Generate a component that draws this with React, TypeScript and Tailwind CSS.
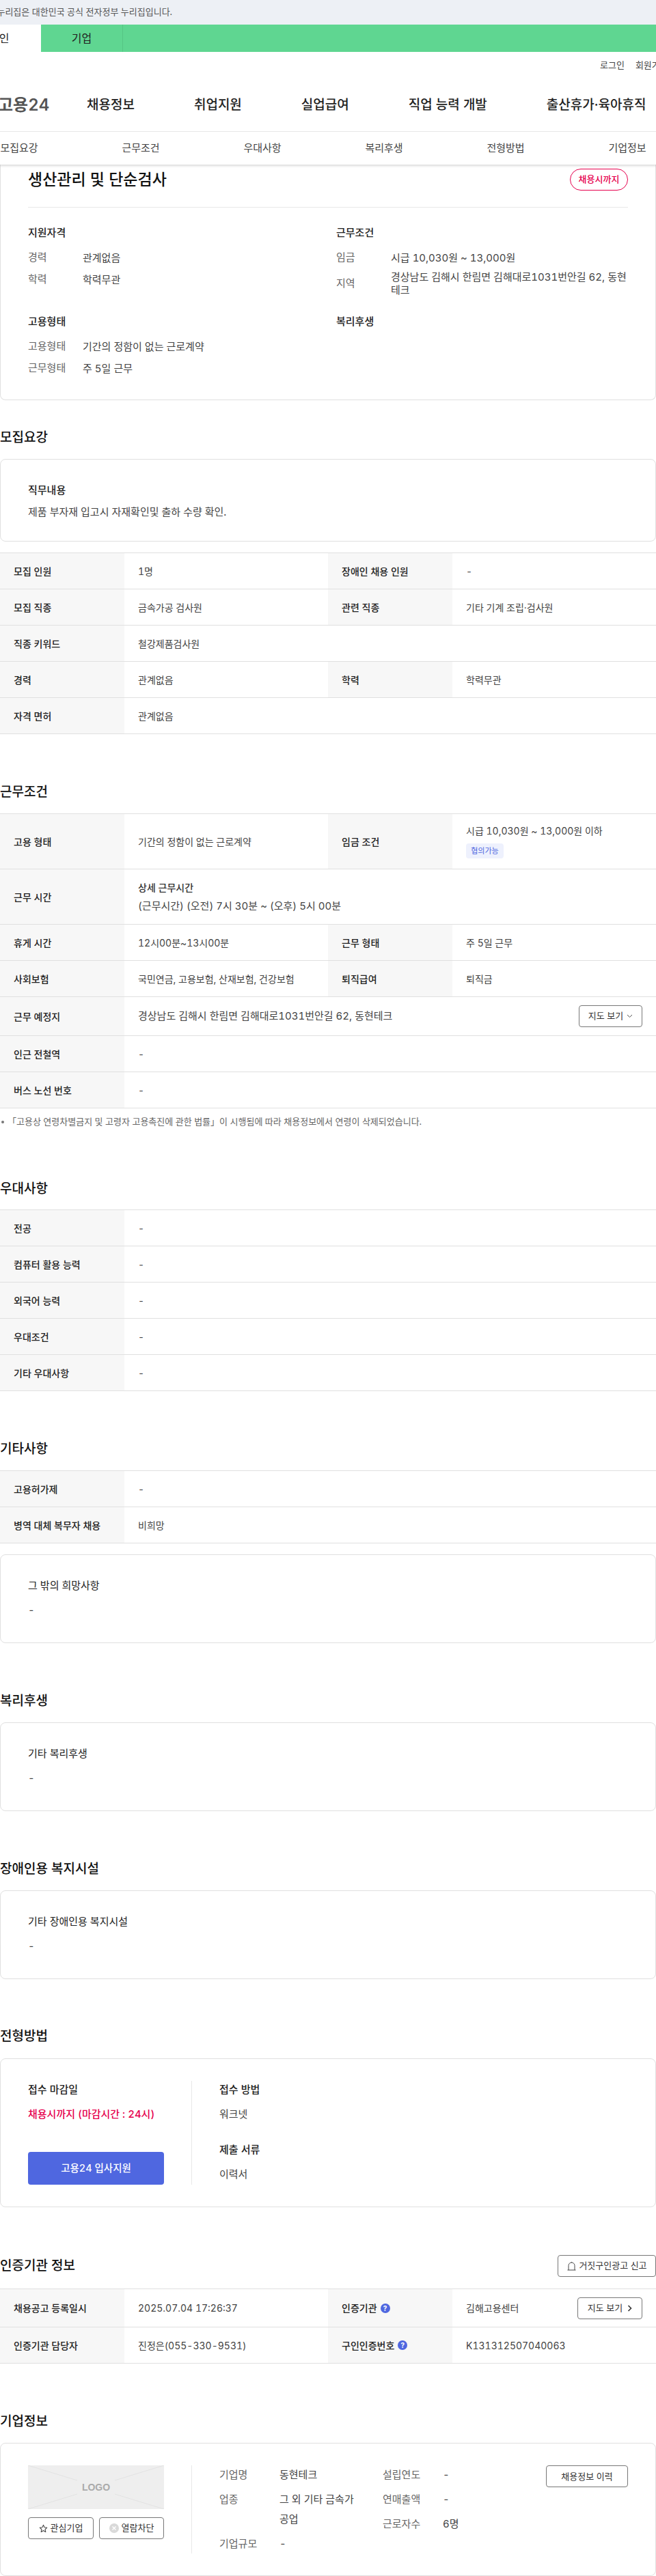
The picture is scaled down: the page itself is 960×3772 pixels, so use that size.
import React from 'react';

const FONT = "font-['Inter','Noto_Sans_CJK_KR',sans-serif] tabular-nums";

type Cell = { label: React.ReactNode; value: React.ReactNode };

// one row of a detail table, one or two label/value pairs
function Row({ cells, height, children }: { cells: Cell[]; height: string; children?: React.ReactNode }) {
  return (
    <div className={`flex border-b border-[#e0e0e0] text-[14px] ${height}`}>
      {cells.map((cell, i) => (
        <React.Fragment key={i}>
          <div className="flex w-[182px] shrink-0 items-center bg-[#f7f7f7] pl-5 font-medium text-[#222]">{cell.label}</div>
          <div className={`flex items-center pl-5 text-[#444] ${cells.length === 2 && i === 0 ? 'w-[298px]' : 'flex-1'}`}>
            {cell.value}
          </div>
        </React.Fragment>
      ))}
      {children}
    </div>
  );
}

function Table({ children }: { children: React.ReactNode }) {
  return <div className="border-t border-[#e0e0e0]">{children}</div>;
}

function Title({ children, className }: { children: React.ReactNode; className: string }) {
  return <h2 className={`h-[30px] text-[19px] leading-[30px] font-medium text-[#111] ${className}`}>{children}</h2>;
}

function Card({ children, className = '' }: { children: React.ReactNode; className?: string }) {
  return <div className={`rounded-lg border border-[#e0e0e0] px-10 ${className}`}>{children}</div>;
}

function NoteCard({ title, className }: { title: string; className: string }) {
  return (
    <Card className={className}>
      <div className="h-[22px] text-[15px] leading-[22px] text-[#222]">{title}</div>
      <div className="mt-[14px] h-[22px] text-[15px] leading-[22px] text-[#444]">-</div>
    </Card>
  );
}

function OutlineButton({ children, className }: { children: React.ReactNode; className: string }) {
  return (
    <button className={`flex h-8 items-center justify-center rounded border border-[#777] bg-white text-[13px] text-[#333] ${className}`}>
      {children}
    </button>
  );
}

function Help() {
  return (
    <span className="ml-[5px] inline-flex h-[14px] w-[14px] items-center justify-center rounded-full bg-[#4f67e0] text-[10px] leading-none font-bold text-white">
      ?
    </span>
  );
}

function SummaryRow({ label, children, className = '' }: { label: string; children: React.ReactNode; className?: string }) {
  return (
    <div className={`flex min-h-8 items-center text-[15px] ${className}`}>
      <div className="w-[80px] shrink-0 text-[#666]">{label}</div>
      <div className="leading-[19px] text-[#444]">{children}</div>
    </div>
  );
}

function SummaryHead({ children }: { children: React.ReactNode }) {
  return <div className="mb-[9px] h-[22px] text-[15px] leading-[22px] font-medium text-[#222]">{children}</div>;
}

function Header() {
  const menu = ['채용정보', '취업지원', '실업급여', '직업 능력 개발', '출산휴가·육아휴직'];
  const tabs = ['모집요강', '근무조건', '우대사항', '복리후생', '전형방법', '기업정보'];
  return (
    <header className="relative z-10 bg-white shadow-[0_2px_3px_rgba(0,0,0,0.15)]">
      <div className="flex h-9 items-center whitespace-nowrap bg-[#edf0f5] text-[13px] text-[#555]">
        <span className="-ml-5">이 누리집은 대한민국 공식 전자정부 누리집입니다.</span>
      </div>
      <div className="flex h-10 bg-[#5fd691] text-[16px] text-[#222]">
        <div className="flex w-[60px] items-center bg-white">
          <span className="-ml-4 whitespace-nowrap">개인</span>
        </div>
        <div className="flex w-[120px] items-center justify-center border-r border-[#55c584]">기업</div>
      </div>
      <div className="flex h-10 items-center gap-4 whitespace-nowrap pl-[878px] text-[13px] text-[#444]">
        <span>로그인</span>
        <span>회원가입</span>
      </div>
      <div className="flex h-[77px] items-center whitespace-nowrap border-b border-[#e8e8e8]">
        <div className="-ml-[3px] w-[130px] shrink-0 text-[24px] font-semibold text-[#555]">고용24</div>
        <nav className="flex gap-[87px] text-[19px] font-medium text-[#222]">
          {menu.map((m) => (
            <span key={m}>{m}</span>
          ))}
        </nav>
      </div>
      <div className="-ml-[61px] grid h-12 w-[1068px] grid-cols-6 items-center text-center text-[15px] text-[#444]">
        {tabs.map((t) => (
          <span key={t}>{t}</span>
        ))}
      </div>
    </header>
  );
}

export default function App() {
  return (
    <div className={`${FONT} w-[960px] overflow-hidden bg-white`}>
      <Header />

      <section className="rounded-b-lg border-x border-b border-[#e0e0e0] px-10 pt-[6px] pb-[30px]">
        <div className="flex items-center justify-between border-b border-[#e8e8e8] pb-6">
          <h1 className="text-[23px] leading-8 font-medium text-[#111]">생산관리 및 단순검사</h1>
          <span className="flex h-8 w-[85px] items-center justify-center rounded-full border border-[#e6004d] text-[13px] font-medium text-[#e6004d]">
            채용시까지
          </span>
        </div>
        <div className="mt-[26px] grid grid-cols-[451px_1fr] gap-y-[26px]">
          <div>
            <SummaryHead>지원자격</SummaryHead>
            <SummaryRow label="경력">관계없음</SummaryRow>
            <SummaryRow label="학력">학력무관</SummaryRow>
          </div>
          <div>
            <SummaryHead>근무조건</SummaryHead>
            <SummaryRow label="임금">시급 10,030원 ~ 13,000원</SummaryRow>
            <SummaryRow label="지역" className="mt-[3px]">경상남도 김해시 한림면 김해대로1031번안길 62, 동현테크</SummaryRow>
          </div>
          <div>
            <SummaryHead>고용형태</SummaryHead>
            <SummaryRow label="고용형태" className="mt-px">기간의 정함이 없는 근로계약</SummaryRow>
            <SummaryRow label="근무형태">주 5일 근무</SummaryRow>
          </div>
          <div>
            <SummaryHead>복리후생</SummaryHead>
          </div>
        </div>
      </section>

      <Title className="mt-10 mb-4">모집요강</Title>
      <Card className="pt-[34px] pb-[31px]">
        <div className="h-[22px] text-[15px] leading-[22px] font-medium text-[#222]">직무내용</div>
        <div className="mt-[10px] h-[22px] text-[15px] leading-[22px] text-[#444]">제품 부자재 입고시 자재확인및 출하 수량 확인.</div>
      </Card>

      <div className="mt-4">
        <Table>
          <Row height="h-[53px]" cells={[{ label: '모집 인원', value: '1명' }, { label: '장애인 채용 인원', value: '-' }]} />
          <Row height="h-[53px]" cells={[{ label: '모집 직종', value: '금속가공 검사원' }, { label: '관련 직종', value: '기타 기계 조립·검사원' }]} />
          <Row height="h-[53px]" cells={[{ label: '직종 키워드', value: '철강제품검사원' }]} />
          <Row height="h-[53px]" cells={[{ label: '경력', value: '관계없음' }, { label: '학력', value: '학력무관' }]} />
          <Row height="h-[53px]" cells={[{ label: '자격 면허', value: '관계없음' }]} />
        </Table>
      </div>

      <Title className="mt-[70px] mb-4">근무조건</Title>
      <Table>
        <Row
          height="h-[81px]"
          cells={[
            { label: '고용 형태', value: '기간의 정함이 없는 근로계약' },
            {
              label: '임금 조건',
              value: (
                <div>
                  <div className="leading-[20px]">시급 10,030원 ~ 13,000원 이하</div>
                  <span className="mt-[8px] flex h-[22px] w-[55px] items-center justify-center rounded bg-[#eef1fd] text-[11px] text-[#4f67e0]">협의가능</span>
                </div>
              ),
            },
          ]}
        />
        <Row
          height="h-[81px]"
          cells={[
            {
              label: '근무 시간',
              value: (
                <div className="text-[15px] leading-[27px]">
                  <div className="text-[14px] font-medium text-[#333]">상세 근무시간</div>
                  <div>(근무시간) (오전) 7시 30분 ~ (오후) 5시 00분</div>
                </div>
              ),
            },
          ]}
        />
        <Row height="h-[53px]" cells={[{ label: '휴게 시간', value: '12시00분~13시00분' }, { label: '근무 형태', value: '주 5일 근무' }]} />
        <Row height="h-[53px]" cells={[{ label: '사회보험', value: '국민연금, 고용보험, 산재보험, 건강보험' }, { label: '퇴직급여', value: '퇴직금' }]} />
        <Row height="h-[57px]" cells={[{ label: '근무 예정지', value: <span className="text-[15px]">경상남도 김해시 한림면 김해대로1031번안길 62, 동현테크</span> }]}>
          <div className="flex items-center pr-5">
            <OutlineButton className="w-[93px] gap-[5px]">
              지도 보기
              <svg width="9" height="6" viewBox="0 0 9 6" fill="none" stroke="#555" strokeWidth="1">
                <path d="M1 1l3.5 3.5L8 1" />
              </svg>
            </OutlineButton>
          </div>
        </Row>
        <Row height="h-[53px]" cells={[{ label: '인근 전철역', value: '-' }]} />
        <Row height="h-[53px]" cells={[{ label: '버스 노선 번호', value: '-' }]} />
      </Table>
      <div className="mt-[10px] flex h-5 items-center text-[13px] text-[#666]">
        <span className="mr-[5px] ml-[2px] h-[4px] w-[4px] rounded-full bg-[#777]" />
        「고용상 연령차별금지 및 고령자 고용촉진에 관한 법률」이 시행됨에 따라 채용정보에서 연령이 삭제되었습니다.
      </div>

      <Title className="mt-[73px] mb-[15px]">우대사항</Title>
      <Table>
        <Row height="h-[53px]" cells={[{ label: '전공', value: '-' }]} />
        <Row height="h-[53px]" cells={[{ label: '컴퓨터 활용 능력', value: '-' }]} />
        <Row height="h-[53px]" cells={[{ label: '외국어 능력', value: '-' }]} />
        <Row height="h-[53px]" cells={[{ label: '우대조건', value: '-' }]} />
        <Row height="h-[53px]" cells={[{ label: '기타 우대사항', value: '-' }]} />
      </Table>

      <Title className="mt-[70px] mb-4">기타사항</Title>
      <Table>
        <Row height="h-[53px]" cells={[{ label: '고용허가제', value: '-' }]} />
        <Row height="h-[53px]" cells={[{ label: '병역 대체 복무자 채용', value: '비희망' }]} />
      </Table>
      <NoteCard title="그 밖의 희망사항" className="mt-4 pt-[34px] pb-[36px]" />

      <Title className="mt-[70px] mb-4">복리후생</Title>
      <NoteCard title="기타 복리후생" className="pt-[34px] pb-[36px]" />

      <Title className="mt-[70px] mb-4">장애인용 복지시설</Title>
      <NoteCard title="기타 장애인용 복지시설" className="pt-[34px] pb-[36px]" />

      <Title className="mt-[69px] mb-[17px]">전형방법</Title>
      <Card className="flex py-8">
        <div className="flex h-[152px] w-[199px] shrink-0 flex-col justify-between">
          <div className="whitespace-nowrap pt-[2px] text-[15px] leading-[22px]">
            <div className="font-medium text-[#222]">접수 마감일</div>
            <div className="mt-[14px] font-medium text-[#e6004d]">채용시까지 (마감시간 : 24시)</div>
          </div>
          <button className="h-12 rounded bg-[#4f67e0] text-[14.5px] font-medium text-white">고용24 입사지원</button>
        </div>
        <div className="ml-10 flex-1 border-l border-[#e8e8e8] pt-[2px] pl-10 text-[15px] leading-[22px]">
          <div className="font-medium text-[#222]">접수 방법</div>
          <div className="mt-[14px] text-[#444]">워크넷</div>
          <div className="mt-[30px] font-medium text-[#222]">제출 서류</div>
          <div className="mt-[14px] text-[#444]">이력서</div>
        </div>
      </Card>

      <div className="mt-[70px] mb-[17px] flex h-8 items-center justify-between">
        <Title className="">인증기관 정보</Title>
        <OutlineButton className="w-[144px] gap-[3px]">
          <svg width="15" height="15" viewBox="0 0 15 15" fill="none" stroke="#444" strokeWidth="1">
            <path d="M3 13V6.5a4.5 4.5 0 0 1 9 0V13M1.5 13h12M7.5 2V1" />
          </svg>
          거짓구인광고 신고
        </OutlineButton>
      </div>
      <Table>
        <Row
          height="h-[56px]"
          cells={[
            { label: '채용공고 등록일시', value: '2025.07.04 17:26:37' },
            {
              label: (
                <>
                  인증기관
                  <Help />
                </>
              ),
              value: '김해고용센터',
            },
          ]}
        >
          <div className="flex items-center pr-5">
            <OutlineButton className="w-[95px] gap-[7px]">
              지도 보기
              <svg width="7" height="10" viewBox="0 0 7 10" fill="none" stroke="#333" strokeWidth="1.6">
                <path d="M1.5 1l4 4-4 4" />
              </svg>
            </OutlineButton>
          </div>
        </Row>
        <Row
          height="h-[53px]"
          cells={[
            { label: '인증기관 담당자', value: '진정은(055-330-9531)' },
            {
              label: (
                <>
                  구인인증번호
                  <Help />
                </>
              ),
              value: 'K131312507040063',
            },
          ]}
        />
      </Table>

      <Title className="mt-[70px] mb-4">기업정보</Title>
      <Card className="flex pt-8 pb-8">
        <div className="w-[199px] shrink-0">
          <div className="relative flex h-16 items-center justify-center bg-[#eeeeee]">
            <svg className="absolute inset-0 h-full w-full" viewBox="0 0 199 64" preserveAspectRatio="none" stroke="#e2e2e2" fill="none">
              <path d="M0 0l72 22M199 0l-72 22M0 64l72-22M199 64l-72-22" />
            </svg>
            <span className="relative font-['Liberation_Sans',sans-serif] text-[14px] font-bold text-[#aaa]">LOGO</span>
          </div>
          <div className="mt-3 flex justify-between">
            <OutlineButton className="w-[96px] gap-1">
              <svg width="13" height="13" viewBox="0 0 24 24" fill="none" stroke="#444" strokeWidth="2" strokeLinejoin="round">
                <path d="M12 2.5l2.9 6.3 6.9.8-5.1 4.7 1.4 6.8-6.1-3.4-6.1 3.4 1.4-6.8L2.2 9.6l6.9-.8z" />
              </svg>
              관심기업
            </OutlineButton>
            <OutlineButton className="w-[95px] gap-1">
              <svg width="14" height="14" viewBox="0 0 14 14">
                <circle cx="7" cy="7" r="7" fill="#d9d9d9" />
                <path d="M4.5 4.5l5 5M9.5 4.5l-5 5" stroke="#fff" strokeWidth="1.4" />
              </svg>
              열람차단
            </OutlineButton>
          </div>
        </div>
        <div className="ml-10 flex flex-1 border-l border-[#e8e8e8] pl-10 text-[15px] leading-[29px]">
          <div className="-mt-px w-[239px] shrink-0">
            <div className="mb-[7px] flex">
              <span className="w-[88px] shrink-0 text-[#666]">기업명</span>
              <span className="text-[#444]">동현테크</span>
            </div>
            <div className="mb-[7px] flex">
              <span className="w-[88px] shrink-0 text-[#666]">업종</span>
              <span className="w-[120px] break-all text-[#444]">그 외 기타 금속가공업</span>
            </div>
            <div className="flex">
              <span className="w-[88px] shrink-0 text-[#666]">기업규모</span>
              <span className="text-[#444]">-</span>
            </div>
          </div>
          <div className="-mt-px w-[151px] shrink-0">
            {[['설립연도', '-'], ['연매출액', '-'], ['근로자수', '6명']].map(([k, v]) => (
              <div key={k} className="mb-[7px] flex">
                <span className="w-[88px] shrink-0 text-[#666]">{k}</span>
                <span className="text-[#444]">{v}</span>
              </div>
            ))}
          </div>
          <div className="ml-auto">
            <OutlineButton className="w-[120px]">채용정보 이력</OutlineButton>
          </div>
        </div>
      </Card>
    </div>
  );
}
